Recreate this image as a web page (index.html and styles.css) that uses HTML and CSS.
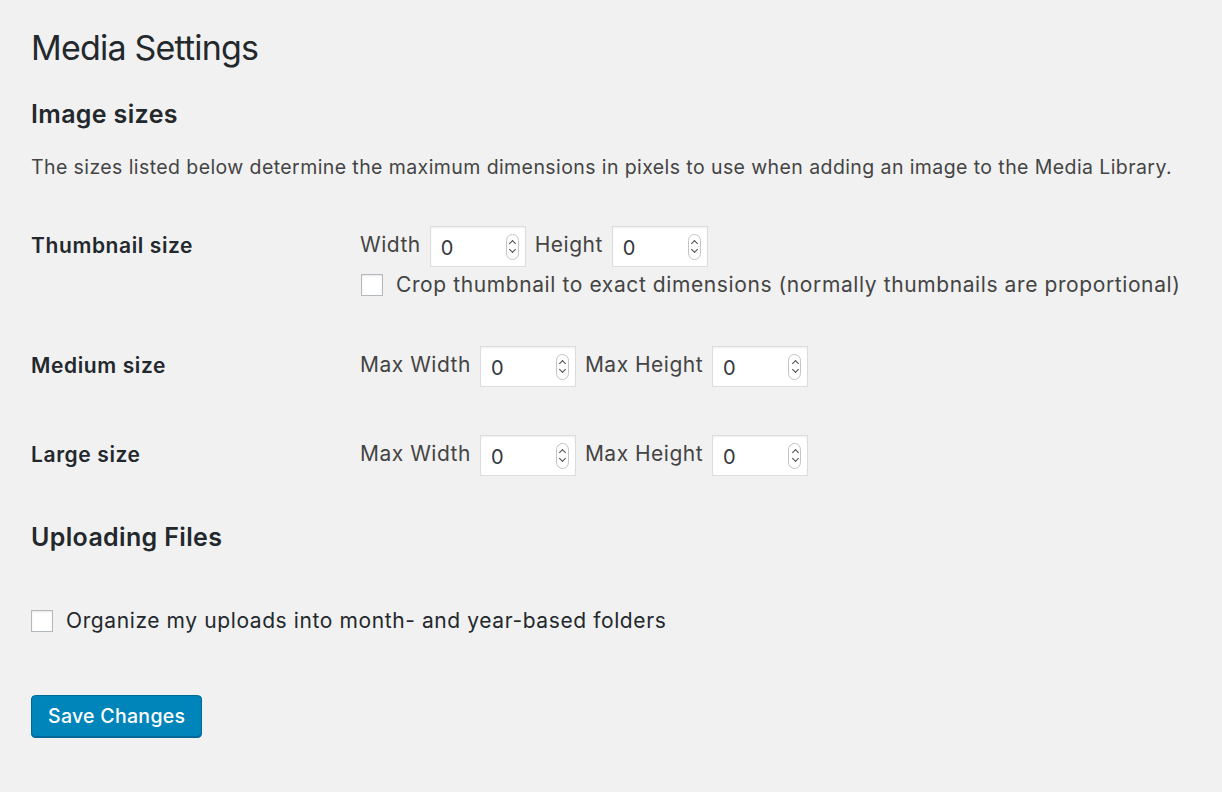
FILE: index.html
```html
<!DOCTYPE html>
<html lang="en">
<head>
    <meta charset="UTF-8">
    <title>Media Settings</title>
    <link rel="stylesheet" href="styles.css">
</head>
<body>
    <div class="wrap">
        <h1 class="page-title">Media Settings</h1>

        <h2 class="section-title">Image sizes</h2>
        <p class="section-desc">The sizes listed below determine the maximum dimensions in pixels to use when adding an image to the Media Library.</p>

        <div class="form-table">
            <div class="form-row row-thumb">
                <div class="row-label">Thumbnail size</div>
                <div class="row-fields">
                    <div class="field-line">
                        <span class="field-label">Width</span>
                        <div class="num-input"><span class="num-value">0</span><span class="spinner"></span></div>
                        <span class="field-label">Height</span>
                        <div class="num-input"><span class="num-value">0</span><span class="spinner"></span></div>
                    </div>
                    <label class="check-line">
                        <span class="checkbox"></span>
                        Crop thumbnail to exact dimensions (normally thumbnails are proportional)
                    </label>
                </div>
            </div>

            <div class="form-row">
                <div class="row-label">Medium size</div>
                <div class="row-fields">
                    <div class="field-line">
                        <span class="field-label">Max Width</span>
                        <div class="num-input"><span class="num-value">0</span><span class="spinner"></span></div>
                        <span class="field-label">Max Height</span>
                        <div class="num-input"><span class="num-value">0</span><span class="spinner"></span></div>
                    </div>
                </div>
            </div>

            <div class="form-row">
                <div class="row-label">Large size</div>
                <div class="row-fields">
                    <div class="field-line">
                        <span class="field-label">Max Width</span>
                        <div class="num-input"><span class="num-value">0</span><span class="spinner"></span></div>
                        <span class="field-label">Max Height</span>
                        <div class="num-input"><span class="num-value">0</span><span class="spinner"></span></div>
                    </div>
                </div>
            </div>
        </div>

        <h2 class="section-title uploads-title">Uploading Files</h2>

        <label class="check-line uploads-check">
            <span class="checkbox"></span>
            Organize my uploads into month- and year-based folders
        </label>

        <button type="submit" class="save-btn">Save Changes</button>
    </div>
</body>
</html>
```

FILE: styles.css
```css
body {
    margin: 0;
    padding: 0;
    background-color: #f1f1f1;
    font-family: Inter, "Open Sans", sans-serif;
    color: #444444;
    font-size: 19.5px;
}

.wrap {
    padding: 26px 30px 40px 31px;
}

.page-title {
    font-size: 34px;
    font-weight: 400;
    color: #23282d;
    margin: 0;
    line-height: 44px;
    letter-spacing: -0.8px;
}

.section-title {
    font-size: 25px;
    font-weight: 600;
    color: #23282d;
    margin: 28px 0 0;
    line-height: 32px;
    letter-spacing: 0.35px;
}

.section-desc {
    margin: 23px 0 0;
    line-height: 28px;
    letter-spacing: 0.41px;
    white-space: nowrap;
}

.form-table {
    margin-top: 45px;
    font-size: 21px;
    letter-spacing: 0.5px;
}

.form-row {
    display: flex;
    height: 89px;
}

.row-thumb {
    height: 120px;
}

.row-label {
    width: 329px;
    font-weight: 600;
    color: #23282d;
    padding-top: 5px;
    line-height: 30px;
    letter-spacing: 0.6px;
}

.field-line {
    display: flex;
    align-items: center;
    gap: 9px;
    height: 41px;
}

.field-label {
    line-height: 30px;
    margin-top: -4px;
}

.num-input {
    width: 96px;
    height: 41px;
    box-sizing: border-box;
    border: 1.5px solid #dddddd;
    background-color: #ffffff;
    box-shadow: inset 0 1px 2px rgba(0, 0, 0, 0.07);
    display: flex;
    align-items: center;
    justify-content: space-between;
    padding: 0 6px 0 10px;
    color: #32373c;
    letter-spacing: 0;
}

.num-value {
    font-size: 20px;
    margin-top: 3px;
}

.spinner {
    width: 13px;
    height: 26px;
    box-sizing: border-box;
    border: 1px solid #c4c4c4;
    border-radius: 7px;
    background-color: #ffffff;
    position: relative;
}

.spinner::before,
.spinner::after {
    content: "";
    position: absolute;
    left: 3.5px;
    width: 4px;
    height: 4px;
    border-left: 1.4px solid #4a4a4a;
    border-top: 1.4px solid #4a4a4a;
}

.spinner::before {
    top: 6px;
    transform: rotate(45deg);
}

.spinner::after {
    top: 12px;
    transform: rotate(-135deg);
}

.check-line {
    display: flex;
    align-items: center;
    gap: 13px;
    margin-top: 3px;
    line-height: 30px;
    letter-spacing: 0.6px;
}

.checkbox {
    width: 22px;
    height: 22px;
    box-sizing: border-box;
    border: 1.5px solid #b4b9be;
    background-color: #ffffff;
    box-shadow: inset 0 1px 2px rgba(0, 0, 0, 0.1);
    flex-shrink: 0;
    margin-left: 1px;
}

.uploads-title {
    margin-top: -3px;
}

.uploads-check {
    margin-top: 53px;
    color: #23282d;
    font-size: 21px;
}

.uploads-check .checkbox {
    margin-left: 0;
}

.save-btn {
    display: block;
    margin-top: 59px;
    height: 42px;
    padding: 0 16px;
    border: 1.5px solid #006799;
    border-radius: 4.5px;
    background-color: #0085ba;
    box-shadow: 0 1px 0 #006799;
    color: #ffffff;
    font-family: Inter, "Open Sans", sans-serif;
    font-size: 19.5px;
    font-weight: 500;
    letter-spacing: 0.3px;
    cursor: pointer;
}
```
